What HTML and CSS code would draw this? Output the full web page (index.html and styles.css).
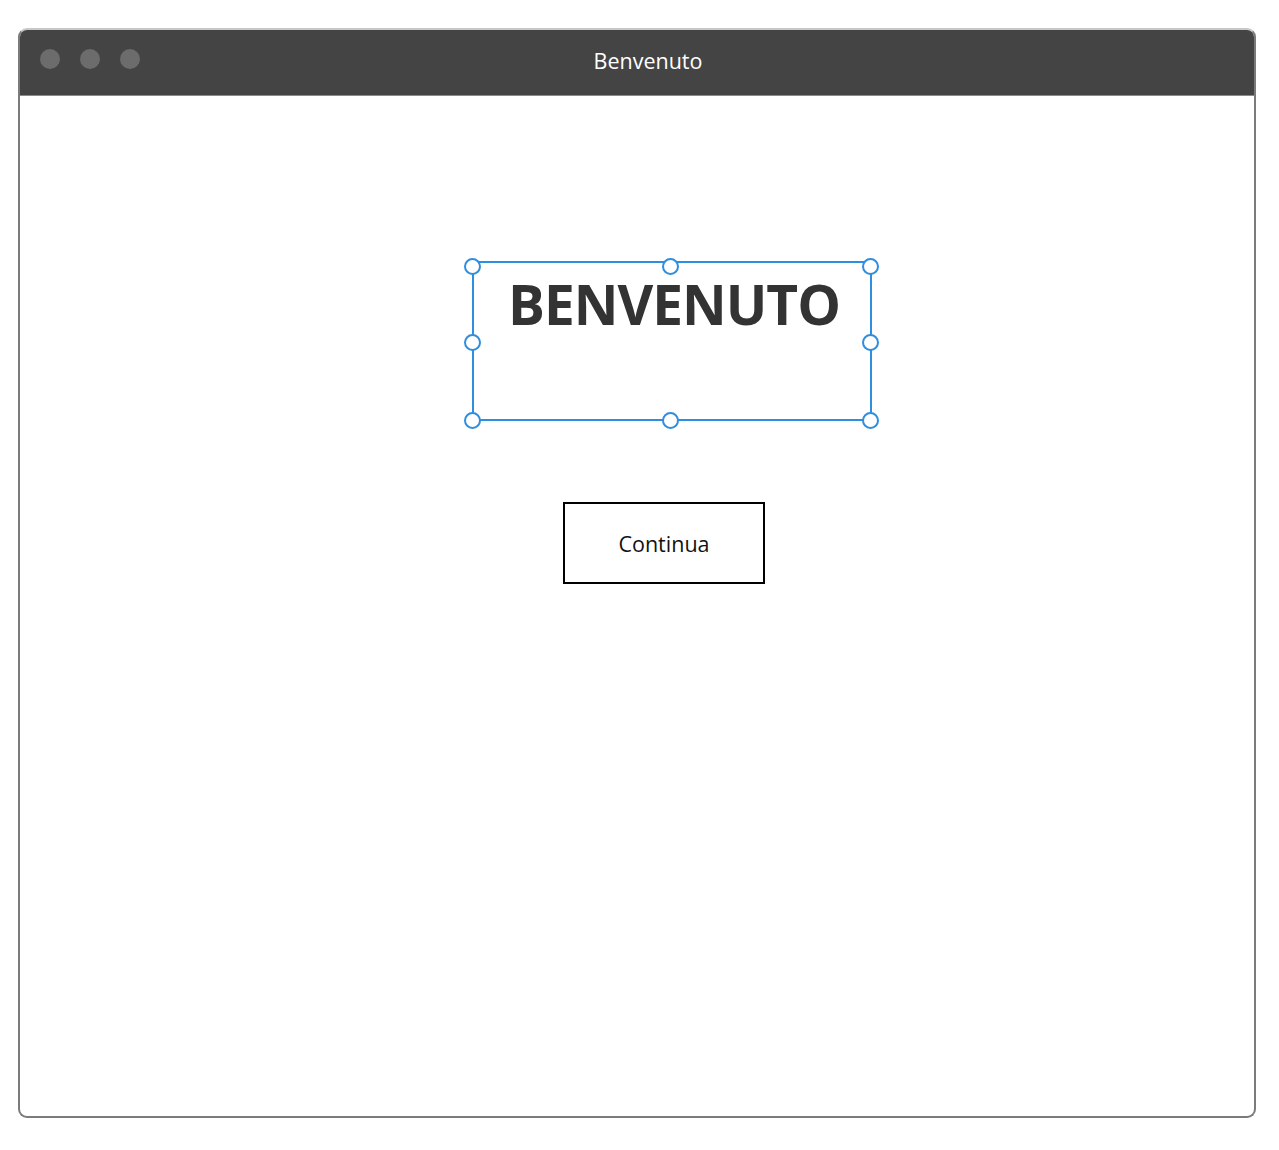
FILE: index.html
```html
<!DOCTYPE html>
<html>
<head>
<meta charset="utf-8">
<link rel="stylesheet" href="styles.css">
</head>
<body>
<div class="window">
  <div class="titlebar">
    <div class="dots"><span class="dot"></span><span class="dot"></span><span class="dot"></span></div>
    <div class="title">Benvenuto</div>
  </div>
  <div class="content">
    <div class="selection">
      <h1 class="heading">BENVENUTO</h1>
      <span class="handle h-tl"></span>
      <span class="handle h-tm"></span>
      <span class="handle h-tr"></span>
      <span class="handle h-ml"></span>
      <span class="handle h-mr"></span>
      <span class="handle h-bl"></span>
      <span class="handle h-bm"></span>
      <span class="handle h-br"></span>
    </div>
    <button class="continue">Continua</button>
  </div>
</div>
</body>
</html>
```
FILE: styles.css
```css
html, body { margin: 0; padding: 0; background: #fff; }
body { padding: 28px 0 0 18px; font-family: "Open Sans", "Noto Sans", sans-serif; }
.window {
  width: 1234px;
  height: 1086px;
  border: 2px solid #7b7b7b;
  border-top-color: #c8c8c8;
  border-radius: 9px;
  overflow: hidden;
  display: flex;
  flex-direction: column;
  background: #fff;
}
.titlebar {
  height: 65px;
  background: #444444;
  border-bottom: 1px solid #8a8a8a;
  position: relative;
  display: flex;
  align-items: center;
  flex-shrink: 0;
}
.dots { display: flex; gap: 20px; padding-left: 20px; margin-top: -7px; }
.dot { width: 20px; height: 20px; border-radius: 50%; background: #6c6c6c; }
.title {
  position: absolute;
  left: 0; right: 0; top: 17px;
  text-align: center;
  color: #fff;
  font-size: 21.5px;
  line-height: 27px;
  padding-left: 22px;
}
.content {
  flex: 1;
  display: flex;
  flex-direction: column;
  align-items: flex-start;
  padding-top: 165px;
}
.selection {
  position: relative;
  width: 396px;
  height: 156px;
  border: 2px solid #2e8ee0;
  margin-left: 452px;
  box-sizing: content-box;
}
.heading {
  margin: 0;
  text-align: center;
  font-family: "Open Sans", sans-serif;
  font-weight: 700;
  font-size: 55px;
  letter-spacing: -1px;
  line-height: 78px;
  color: #333333;
  margin-top: 2px;
  margin-left: 4px;
}
.handle {
  position: absolute;
  width: 13px; height: 13px;
  border: 2px solid #2e8ee0;
  border-radius: 50%;
  background: #fff;
}
.h-tl { left: -10px; top: -5px; }
.h-tm { left: 188px; top: -5px; }
.h-tr { left: 388px; top: -5px; }
.h-ml { left: -10px; top: 71px; }
.h-mr { left: 388px; top: 71px; }
.h-bl { left: -10px; top: 149px; }
.h-bm { left: 188px; top: 149px; }
.h-br { left: 388px; top: 149px; }
.continue {
  margin-top: 81px;
  margin-left: 543px;
  width: 202px;
  height: 82px;
  border: 2px solid #000;
  background: #fff;
  font-family: "Open Sans", sans-serif;
  font-size: 21.5px;
  color: #111;
  padding: 0;
}
```
